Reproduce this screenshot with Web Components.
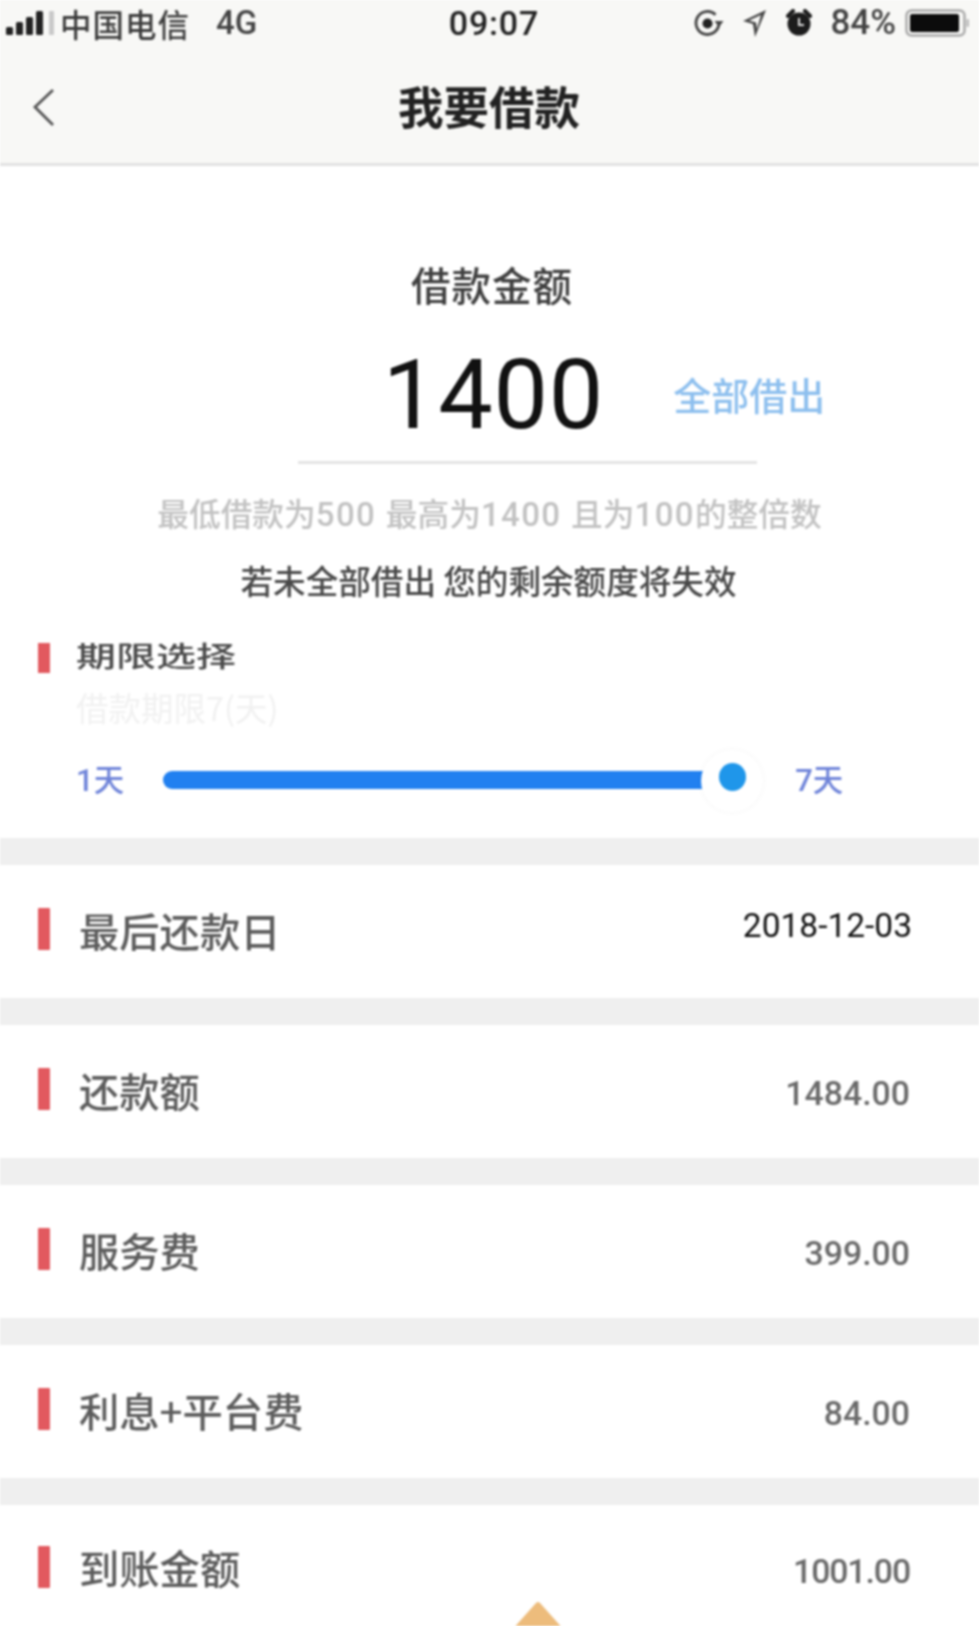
<!DOCTYPE html>
<html lang="zh">
<head>
<meta charset="utf-8">
<title>我要借款</title>
<style>
html,body{margin:0;padding:0;background:#fff}
body{width:979px;height:1626px;overflow:hidden;font-family:"Noto Sans CJK SC","Liberation Sans",sans-serif}
</style>
</head>
<body>
<x-app>
  <x-status-bar></x-status-bar>
  <x-nav-bar title="我要借款"></x-nav-bar>
  <x-amount-panel></x-amount-panel>
  <x-period-panel></x-period-panel>
  <x-info-row label="最后还款日" value="2018-12-03" strong></x-info-row>
  <x-info-row label="还款额" value="1484.00"></x-info-row>
  <x-info-row label="服务费" value="399.00"></x-info-row>
  <x-info-row label="利息+平台费" value="84.00"></x-info-row>
  <x-info-row label="到账金额" value="1001.00" last></x-info-row>
</x-app>
<script>
function shadow(el, html){ el.attachShadow({mode:'open'}).innerHTML = html; }
const CJK = '"Noto Sans CJK SC","Liberation Sans",sans-serif';

customElements.define('x-app', class extends HTMLElement{
  constructor(){super();shadow(this,`<style>
    :host{display:flex;flex-direction:column;position:relative;width:979px;height:1626px;overflow:hidden;background:#fff;filter:blur(.8px)}
    .tri{position:absolute;left:511px;top:1601px;width:54px;height:40px}
  </style><slot></slot>
  <svg class="tri" viewBox="0 0 54 40"><path d="M25 2 Q27 0 29 2 L54 30 L0 30 Z" fill="#edbc7c"/></svg>`);}
});

customElements.define('x-status-bar', class extends HTMLElement{
  constructor(){super();shadow(this,`<style>
    :host{display:block;flex:none;background:#f8f8f6;color:#333;font-family:${CJK}}
    .bar{display:flex;align-items:center;height:48px;padding:0 9px 2px 6px;box-sizing:border-box;font-size:31.500px;position:relative}
    .left,.right{display:flex;align-items:center}
    .left{flex:1}.right{flex:1;justify-content:flex-end}
    .c{font:500 34px/48px Roboto,sans-serif;letter-spacing:.8px;color:#222;width:92px;text-align:center;margin-left:12px;white-space:nowrap}
    .net{font:500 33px/48px Roboto,sans-serif;margin-left:26px;color:#444}
    .car{margin-left:5px;letter-spacing:1px;color:#3c3c3c;font-weight:500}
    .pct{font:500 35px/48px Roboto,sans-serif;color:#444;margin:0 9px 0 18px}
    svg{display:block}
    .i1{margin-right:18px}.i2{margin-right:19px}
  </style>
  <div class="bar">
    <div class="left">
      <svg width="49" height="26" viewBox="0 0 49 26"><g fill="#222"><rect x="0" y="17" width="7" height="8" rx="1.500"/><rect x="10" y="12" width="7" height="13" rx="1.500"/><rect x="20" y="7" width="7" height="18" rx="1.500"/><rect x="30" y="1" width="7" height="24" rx="1.500"/></g><rect x="43" y="1" width="5" height="24" rx="1" fill="#c9c9c9"/></svg>
      <span class="car">中国电信</span><span class="net">4G</span>
    </div>
    <div class="c">09:07</div>
    <div class="right">
      <svg class="i1" width="31" height="30" viewBox="0 0 31 30"><path d="M26 15a11.500 11.500 0 1 1-3.500-8.300" fill="none" stroke="#444" stroke-width="2.800"/><path d="M30.500 13l-4.500 6-4.500-6z" fill="#444"/><circle cx="14.500" cy="15.500" r="5" fill="#222"/></svg>
      <svg class="i2" width="25" height="30" viewBox="0 0 25 30"><path d="M24 2 L13 29 L11 16 L1 13 Z M19 7 L7 12.500 L14 14.500 L15 21 Z" fill="#444" fill-rule="evenodd"/></svg>
      <svg width="26" height="28" viewBox="0 0 26 28"><circle cx="13" cy="15" r="11.500" fill="#1c1c1c"/><path d="M2 7 L7 2 M24 7 L19 2" stroke="#1c1c1c" stroke-width="4" stroke-linecap="round"/><path d="M13 9v7h5" stroke="#ddd" stroke-width="2" fill="none"/></svg>
      <span class="pct">84%</span>
      <svg width="65" height="28" viewBox="0 0 65 28"><rect x="1.500" y="1.500" width="58" height="25" rx="5" fill="none" stroke="#aaa" stroke-width="2.500"/><rect x="5" y="5" width="49" height="18" rx="2" fill="#0c0c0c"/><rect x="61.500" y="10" width="2.500" height="8" rx="1" fill="#bbb"/></svg>
    </div>
  </div>`);}
});

customElements.define('x-nav-bar', class extends HTMLElement{
  constructor(){super();const t=this.getAttribute('title');this.removeAttribute('title');shadow(this,`<style>
    :host{display:block;flex:none;background:#f8f8f6;border-bottom:3px solid #e2e2e2;font-family:${CJK}}
    .nav{display:flex;align-items:center;justify-content:center;height:115px;position:relative;box-sizing:border-box}
    .back{position:absolute;left:32px;top:40px}
    h1{margin:0 0 0 -1px;font-size:45.500px;font-weight:700;line-height:60px;color:#222;position:relative;top:-1px}
  </style><div class="nav">
    <svg class="back" width="24" height="40" viewBox="0 0 24 40"><path d="M21 2 L3 19 L21 37" fill="none" stroke="#555" stroke-width="2.800"/></svg>
    <h1>${t}</h1></div>`);}
});

customElements.define('x-amount-panel', class extends HTMLElement{
  constructor(){super();shadow(this,`<style>
    :host{display:flex;flex:none;flex-direction:column;align-items:center;padding-top:93px;font-family:${CJK}}
    .head{font-size:39.500px;font-weight:500;line-height:50px;color:#3f3f3f;letter-spacing:1px;margin-left:5px}
    .row{display:grid;grid-template-columns:1fr auto 1fr;align-items:center;width:100%;margin-top:33px;height:100px}
    .num{grid-column:2;font:400 97px/100px Roboto,sans-serif;letter-spacing:.8px;color:#111;position:relative;left:4px;top:3px}
    .all{grid-column:3;font-size:38px;font-weight:500;line-height:50px;color:#8dbfee;margin-left:73px;position:relative;top:2px;white-space:nowrap}
    .line{width:459px;height:3px;background:#e4e4e4;margin-top:19px;margin-left:75px}
    .hint{font-size:31.700px;font-weight:500;line-height:44px;color:#c2c2c2;margin-top:26px;white-space:nowrap}
    .hint b{font:500 33px Roboto,sans-serif;letter-spacing:1.400px}
    .warn{font-size:32.600px;font-weight:500;line-height:44px;color:#484848;margin-top:24px;margin-left:-2px;white-space:nowrap}
  </style>
  <div class="head">借款金额</div>
  <div class="row"><div class="num">1400</div><div class="all">全部借出</div></div>
  <div class="line"></div>
  <div class="hint">最低借款为<b>500 </b>最高为<b>1400 </b>且为<b>100</b>的整倍数</div>
  <div class="warn">若未全部借出 您的剩余额度将失效</div>`);}
});

customElements.define('x-period-panel', class extends HTMLElement{
  constructor(){super();shadow(this,`<style>
    :host{display:block;flex:none;height:236px;box-sizing:border-box;padding:41px 0 0 38px;font-family:${CJK}}
    .title{display:flex;align-items:center;height:30px}
    .mark{width:12px;height:30px;background:#e2595f;flex:none}
    .t{margin-left:26px;font-size:40px;font-weight:500;line-height:30px;color:#4a4a4a;position:relative;top:-3px;transform:scaleY(.72);white-space:nowrap}
    .sub{margin:14px 0 0 38px;font-size:32.500px;line-height:40px;color:#f1f1f1;white-space:nowrap}
    .slider{display:flex;align-items:center;margin:33px 0 0 38px;height:40px}
    .lab{font-size:30.500px;font-weight:500;line-height:40px;color:#6f84d9;white-space:nowrap;position:relative;top:-2px}
    .lab b{font:500 31px Roboto,sans-serif}
    .track{width:544px;height:18px;border-radius:9px 0 0 9px;background:#2180f0;margin-left:39px;flex:none}
    .knob{width:62px;height:62px;border-radius:50%;background:#fff;box-shadow:0 0 6px rgba(0,0,0,.04);display:flex;align-items:center;justify-content:center;margin:2px 0 0 -6px;flex:none}
    .knob i{display:block;width:27px;height:28px;border-radius:50%;background:#1f96ea;margin-top:-8px}
    .lab.r{margin-left:32px}
  </style>
  <div class="title"><span class="mark"></span><span class="t">期限选择</span></div>
  <div class="sub">借款期限7(天)</div>
  <div class="slider">
    <span class="lab"><b>1</b>天</span>
    <div class="track"></div>
    <div class="knob"><i></i></div>
    <span class="lab r"><b>7</b>天</span>
  </div>`);}
});

customElements.define('x-info-row', class extends HTMLElement{
  constructor(){super();
    const last=this.hasAttribute('last');
    shadow(this,`<style>
    :host{display:block;flex:none;border-top:27px solid #efefef;height:${last?123:133}px;font-family:${CJK}}
    .row{display:flex;align-items:center;height:133px;padding:0 69px 0 38px;box-sizing:border-box}
    .mark{width:12px;height:42px;background:#e2595f;flex:none;border-radius:1px;position:relative;top:-3px}
    .l{margin-left:29px;font-size:40.300px;font-weight:500;line-height:56px;color:#5c5c5c;flex:1;position:relative;top:-2px;white-space:nowrap}
    .v{font:500 33.800px/44px Roboto,sans-serif;color:#6a6a6a;position:relative;top:2px}
    :host([strong]) .row{padding-right:67px}
    :host([strong]) .v{font:400 33.500px/44px Roboto,sans-serif;color:#111;top:-6px}
    :host([last]) .l,:host([last]) .mark{top:-5px}
    :host([last]) .v{top:0;letter-spacing:-1.100px}
  </style><div class="row"><span class="mark"></span><span class="l">${this.getAttribute('label')}</span><span class="v">${this.getAttribute('value')}</span></div>`);}
});
</script>
</body>
</html>
